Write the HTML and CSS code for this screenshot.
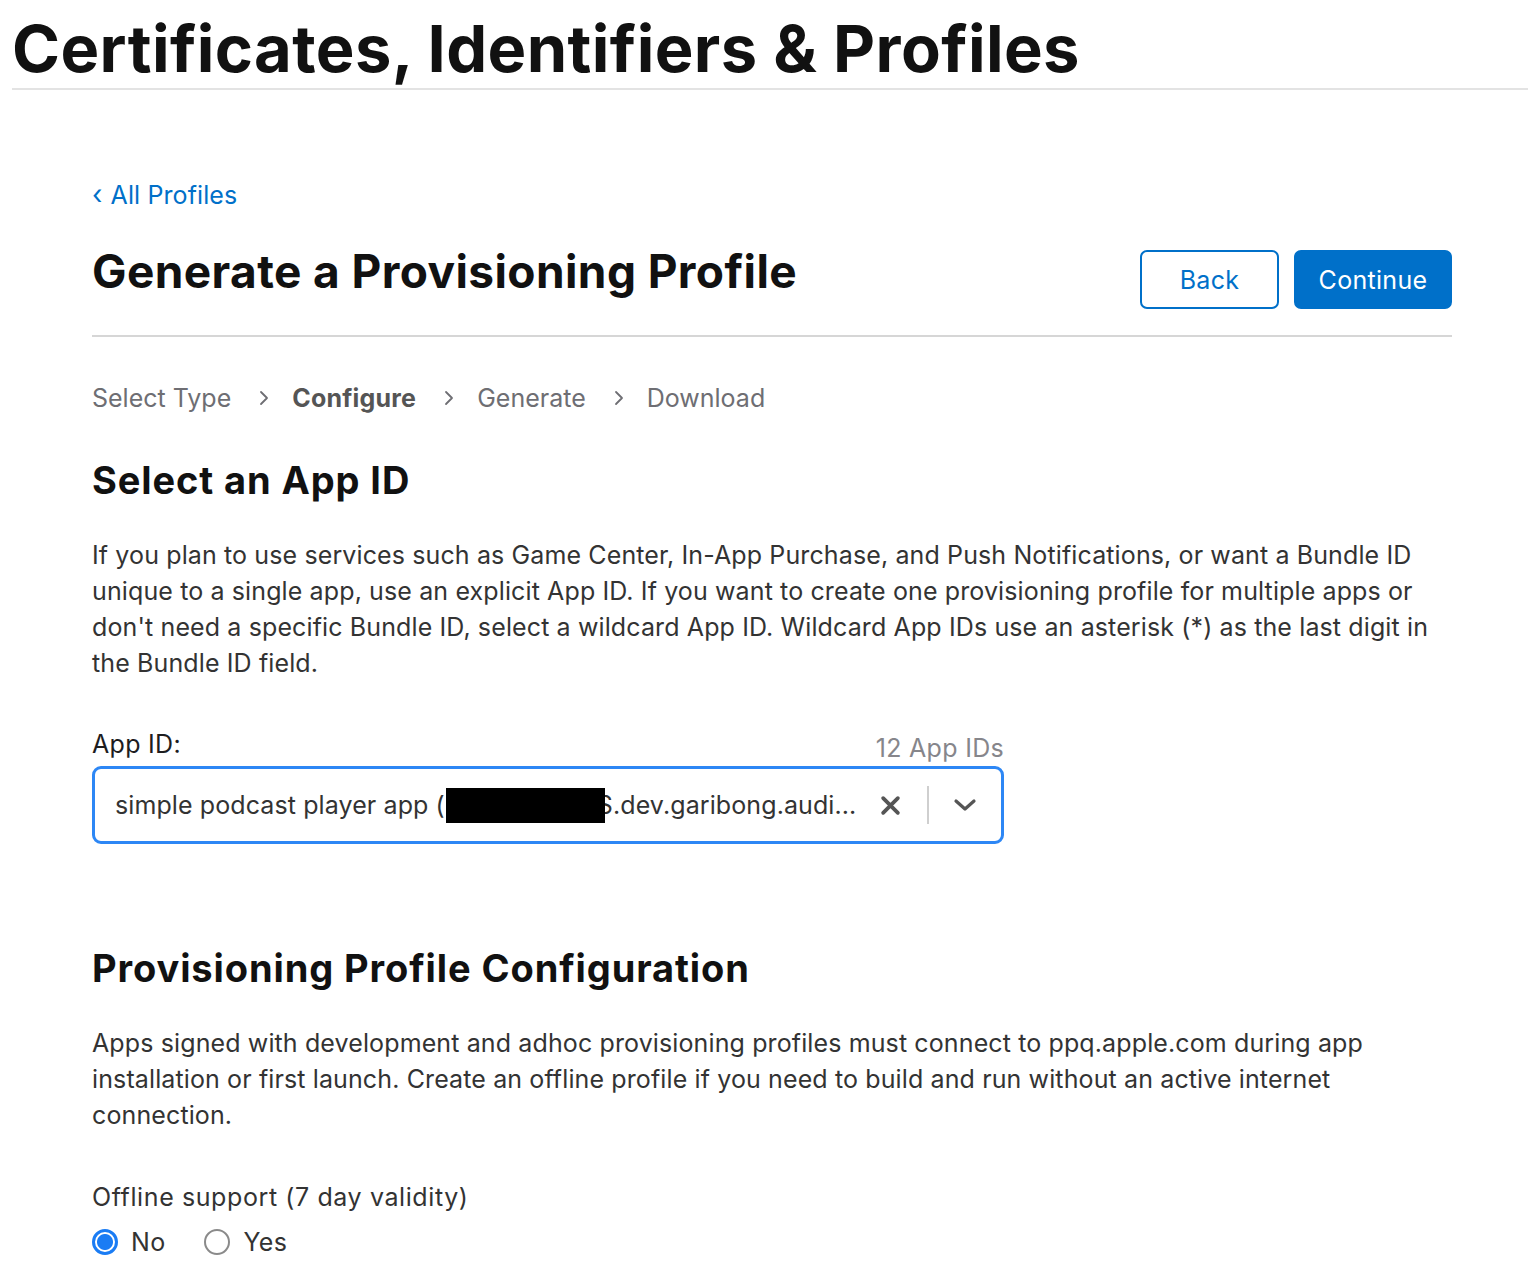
FILE: index.html
```html
<!DOCTYPE html>
<html>
<head>
<meta charset="utf-8">
<link rel="stylesheet" href="styles.css">
</head>
<body>
<header class="site-header">
  <h1 class="site-title">Certificates, Identifiers &amp; Profiles</h1>
</header>
<main class="content">
  <a class="back-link" href="#"><span class="back-chev">‹</span> All Profiles</a>
  <div class="page-head">
    <h2 class="page-title">Generate a Provisioning Profile</h2>
    <div class="actions">
      <button class="btn btn-outline">Back</button>
      <button class="btn btn-primary">Continue</button>
    </div>
  </div>
  <nav class="steps">
    <span class="step">Select Type</span>
    <svg class="step-chev" viewBox="0 0 10 16"><path d="M2 2l6 6-6 6" fill="none" stroke="#6e6e73" stroke-width="1.8" stroke-linecap="round" stroke-linejoin="round"/></svg>
    <span class="step step-active">Configure</span>
    <svg class="step-chev" viewBox="0 0 10 16"><path d="M2 2l6 6-6 6" fill="none" stroke="#6e6e73" stroke-width="1.8" stroke-linecap="round" stroke-linejoin="round"/></svg>
    <span class="step">Generate</span>
    <svg class="step-chev" viewBox="0 0 10 16"><path d="M2 2l6 6-6 6" fill="none" stroke="#6e6e73" stroke-width="1.8" stroke-linecap="round" stroke-linejoin="round"/></svg>
    <span class="step">Download</span>
  </nav>

  <section class="section">
    <h3 class="section-title">Select an App ID</h3>
    <p class="para">If you plan to use services such as Game Center, In-App Purchase, and Push Notifications, or want a Bundle ID unique to a single app, use an explicit App ID. If you want to create one provisioning profile for multiple apps or don't need a specific Bundle ID, select a wildcard App ID. Wildcard App IDs use an asterisk (*) as the last digit in the Bundle ID field.</p>
    <div class="field">
      <div class="field-labels">
        <span class="field-label">App ID:</span>
        <span class="field-count">12 App IDs</span>
      </div>
      <div class="select">
        <div class="select-value">simple podcast player app (<span class="redact"></span>S.dev.garibong.audi...</div>
        <svg class="select-clear" viewBox="0 0 20 20"><path d="M3 3l14 14M17 3L3 17" stroke="#555" stroke-width="3.6" stroke-linecap="round"/></svg>
        <span class="select-sep"></span>
        <svg class="select-chev" viewBox="0 0 24 14"><path d="M3 3l9 8 9-8" fill="none" stroke="#555" stroke-width="3.2" stroke-linecap="round" stroke-linejoin="round"/></svg>
      </div>
    </div>
  </section>

  <section class="section section-config">
    <h3 class="section-title">Provisioning Profile Configuration</h3>
    <p class="para">Apps signed with development and adhoc provisioning profiles must connect to ppq.apple.com during app installation or first launch. Create an offline profile if you need to build and run without an active internet connection.</p>
    <div class="offline">
      <div class="offline-label">Offline support (7 day validity)</div>
      <div class="radios">
        <label class="radio"><span class="radio-dot radio-on"></span>No</label>
        <label class="radio"><span class="radio-dot"></span>Yes</label>
      </div>
    </div>
  </section>
</main>
</body>
</html>
```

FILE: styles.css
```css
* { box-sizing: border-box; }
html, body { margin: 0; padding: 0; background: #fff; }
body {
  font-family: Inter, "Noto Sans", "Liberation Sans", sans-serif;
  color: #1d1d1f;
}
.site-header {
  margin-left: 12px;
  border-bottom: 2px solid #e3e3e3;
  height: 90px;
}
.site-title {
  margin: 0;
  padding-top: 10px;
  font-size: 65px;
  line-height: 78px;
  font-weight: 700;
  letter-spacing: 0.4px;
  color: #111;
}
.content {
  width: 1360px;
  margin-left: 92px;
  padding-top: 90px;
}
.back-link {
  display: inline-block;
  font-size: 25px;
  line-height: 30px;
  letter-spacing: 0.1px;
  color: #0070c9;
  text-decoration: none;
}
.back-chev { font-size: 27px; margin-right: 1px; }
.page-head {
  display: flex;
  justify-content: space-between;
  align-items: flex-start;
  margin-top: 33px;
  padding-bottom: 26px;
  border-bottom: 2px solid #d6d6d6;
}
.page-title {
  margin: 0;
  font-size: 46px;
  line-height: 56px;
  font-weight: 700;
  color: #111;
  letter-spacing: 0.4px;
}
.actions { display: flex; gap: 15px; margin-top: 7px; }
.btn {
  font-family: inherit;
  font-size: 25px;
  letter-spacing: 0.3px;
  height: 59px;
  border-radius: 7px;
  border: 2px solid #0070c9;
  padding: 0;
  cursor: pointer;
}
.btn-outline { background: #fff; color: #0070c9; width: 139px; }
.btn-primary { background: #0070c9; color: #fff; width: 158px; }
.steps {
  display: flex;
  align-items: center;
  margin-top: 43px;
  font-size: 25px;
  line-height: 36px;
  color: #6e6e73;
}
.step-active { font-weight: 700; color: #555; letter-spacing: 0.2px; }
.step-chev { width: 10px; height: 16px; margin: 0 23px 0 28px; }
.section { margin-top: 39px; }
.section-title {
  margin: 0;
  font-size: 38px;
  line-height: 50px;
  font-weight: 700;
  letter-spacing: 0.9px;
  color: #111;
}
.para {
  margin: 32px 0 0;
  font-size: 25px;
  line-height: 36px;
  letter-spacing: 0.12px;
  color: #333;
}
.field { width: 912px; margin-top: 48px; }
.field-labels {
  display: flex;
  justify-content: space-between;
  align-items: flex-end;
  font-size: 25px;
  line-height: 30px;
  letter-spacing: 0.3px;
}
.field-label { color: #1d1d1f; }
.field-count { color: #86868b; position: relative; top: 4px; }
.select {
  display: flex;
  align-items: center;
  margin-top: 7px;
  height: 78px;
  border: 3px solid #2d87f5;
  border-radius: 9px;
  padding: 0 24px 0 20px;
}
.select-value {
  flex: 1;
  font-size: 25px;
  letter-spacing: 0.1px;
  color: #333;
  white-space: nowrap;
  overflow: hidden;
}
.redact {
  display: inline-block;
  width: 159px;
  height: 35px;
  background: #000;
  vertical-align: -9px;
  margin-right: -8px;
  margin-left: 1px;
  position: relative;
  z-index: 1;
}
.select-clear { width: 21px; height: 21px; margin: 0 26px 0 10px; }
.select-sep { width: 2px; height: 38px; background: #cfcfcf; margin: 0 24px 0 0; }
.select-chev { width: 24px; height: 14px; }
.section-config { margin-top: 99px; }
.offline { margin-top: 49px; }
.offline-label { font-size: 25px; line-height: 30px; letter-spacing: 0.6px; color: #333; }
.radios { display: flex; gap: 39px; margin-top: 15px; }
.radio {
  display: flex;
  align-items: center;
  gap: 13px;
  font-size: 25px;
  letter-spacing: 0.3px;
  color: #333;
}
.radio-dot {
  width: 26px;
  height: 26px;
  border-radius: 50%;
  border: 2px solid #8a8a8a;
  background: #fff;
}
.radio-on {
  border: 3px solid #1a7cf4;
  background: radial-gradient(circle, #1a7cf4 0 7.5px, #fff 8.5px);
}
```
